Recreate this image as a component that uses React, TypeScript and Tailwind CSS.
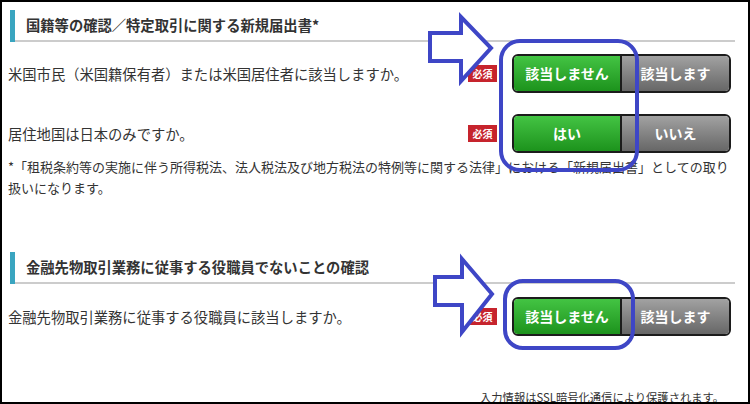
import React from 'react';

interface ChoiceProps {
  yes: string;
  no: string;
}

// 選択ボタン (左が選択中)
function Choice({ yes, no }: ChoiceProps) {
  return (
    <div className="flex h-[39px] w-[219px] shrink-0 overflow-hidden rounded-[6px] border-2 border-[#1c1c1c]">
      <div className="flex w-[108px] items-center justify-center border-r-2 border-[#1c1c1c] bg-linear-to-b from-[#43c443] to-[#1c931c] text-[14px] font-bold text-white">
        {yes}
      </div>
      <div className="flex flex-1 items-center justify-center bg-linear-to-b from-[#a2a2a2] to-[#676767] text-[14px] font-bold text-white">
        {no}
      </div>
    </div>
  );
}

function Required() {
  return (
    <span className="flex h-[17px] w-[29px] shrink-0 items-center justify-center bg-[#c6242d] text-[10px] font-bold leading-none text-white">
      必須
    </span>
  );
}

function SectionTitle({ children }: { children: React.ReactNode }) {
  return (
    <div className="ml-[8px] mr-[13px] flex h-[32px]">
      <div className="w-[5px] bg-[#3aa5c0]" />
      <div className="flex flex-1 items-center border-b-2 border-[#cccccc] pl-[11px] text-[14.3px] font-bold text-[#333]">
        {children}
      </div>
    </div>
  );
}

function Row({ label, yes, no, className = '' }: { label: string; yes: string; no: string; className?: string }) {
  return (
    <div className={`flex items-center pl-[6px] pr-[17px] ${className}`}>
      <p className="flex-1 text-[14.3px] text-[#333]">{label}</p>
      <Required />
      <div className="w-[15px]" />
      <Choice yes={yes} no={no} />
    </div>
  );
}

export default function App() {
  return (
    <div className="relative h-[404px] w-[750px] overflow-hidden border-2 border-black bg-white font-['Noto_Sans_CJK_JP','Noto_Sans',sans-serif]">
      <div className="pt-[8px]">
        <SectionTitle>国籍等の確認／特定取引に関する新規届出書*</SectionTitle>
        <Row
          className="mt-[12px]"
          label="米国市民（米国籍保有者）または米国居住者に該当しますか。"
          yes="該当しません"
          no="該当します"
        />
        <Row className="mt-[21px]" label="居住地国は日本のみですか。" yes="はい" no="いいえ" />
        <p className="mt-[3px] pl-[6px] pr-[14px] text-[13px] leading-[21px] text-[#333]">
          *「租税条約等の実施に伴う所得税法、法人税法及び地方税法の特例等に関する法律」における「新規届出書」としての取り扱いになります。
        </p>

        <div className="mt-[54px]">
          <SectionTitle>金融先物取引業務に従事する役職員でないことの確認</SectionTitle>
        </div>
        <Row
          className="mt-[13px]"
          label="金融先物取引業務に従事する役職員に該当しますか。"
          yes="該当しません"
          no="該当します"
        />
        <p className="mt-[54px] pr-[24px] text-right text-[11.3px] leading-[14px] text-[#333]">
          入力情報はSSL暗号化通信により保護されます。
        </p>
      </div>

      {/* 注釈 (矢印と囲み) */}
      <svg className="pointer-events-none absolute -left-[2px] -top-[2px]" width="750" height="404">
        <g fill="none" stroke="#3e46c6" strokeWidth="4" strokeLinejoin="miter">
          <polygon points="430,33 461,33 461,17 491,48 461,81 461,61 430,61" fill="#fff" />
          <rect x="501" y="41" width="136" height="129" rx="19" />
          <polygon points="435,277 462,277 462,259 492,294 462,332 462,305 435,305" fill="#fff" />
          <rect x="505" y="281" width="128" height="67" rx="18" />
        </g>
      </svg>
    </div>
  );
}
